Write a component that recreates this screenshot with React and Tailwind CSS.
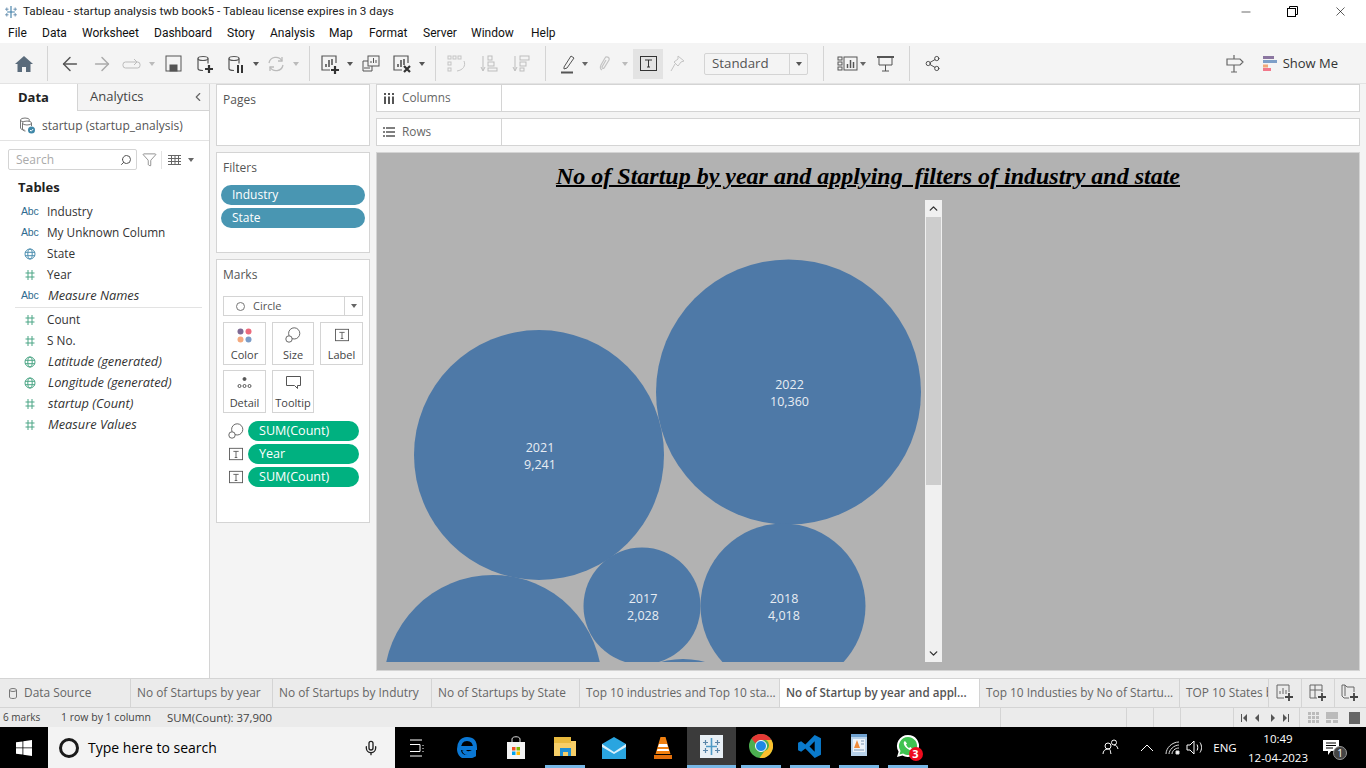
import {
  ArrowLeft,
  ArrowRight,
  ChevronDown,
  ChevronLeft,
  ChevronUp,
  Filter,
  Mic,
  Minus,
  Search,
  Share2,
  X,
} from "lucide-react";

const menus = [
  { label: "File", w: "w-[34px]" },
  { label: "Data", w: "w-[40px]" },
  { label: "Worksheet", w: "w-[72px]" },
  { label: "Dashboard", w: "w-[73px]" },
  { label: "Story", w: "w-[43px]" },
  { label: "Analysis", w: "w-[59px]" },
  { label: "Map", w: "w-[40px]" },
  { label: "Format", w: "w-[54px]" },
  { label: "Server", w: "w-[48px]" },
  { label: "Window", w: "w-[60px]" },
  { label: "Help", w: "w-[30px]" },
];

const fields = [
  { icon: "abc", name: "Industry" },
  { icon: "abc", name: "My Unknown Column" },
  { icon: "globe", name: "State", color: "#4e8fb0" },
  { icon: "hash", name: "Year", color: "#4ba585" },
  { icon: "abc", name: "Measure Names", italic: true },
];

const measures = [
  { icon: "hash", name: "Count", color: "#4ba585" },
  { icon: "hash", name: "S No.", color: "#4ba585" },
  { icon: "globe", name: "Latitude (generated)", italic: true, color: "#4ba585" },
  { icon: "globe", name: "Longitude (generated)", italic: true, color: "#4ba585" },
  { icon: "hash", name: "startup (Count)", italic: true, color: "#4ba585" },
  { icon: "hash", name: "Measure Values", italic: true, color: "#4ba585" },
];

const tabs = [
  { label: "No of Startups by year", w: "w-[142px]" },
  { label: "No of Startups by Indutry", w: "w-[159px]" },
  { label: "No of Startups by State", w: "w-[148px]" },
  { label: "Top 10 industries and Top 10 sta...", w: "w-[200px]" },
  { label: "No of Startup by year and appl...", w: "w-[200px]", active: true },
  { label: "Top 10 Industies by No of Startu...", w: "w-[200px]" },
];

const circles = [
  { cx: 162, cy: 255, r: 125, a: "2021", b: "9,241" },
  { cx: 411.5, cy: 192, r: 132.5, a: "2022", b: "10,360" },
  { cx: 265, cy: 406, r: 58.5, a: "2017", b: "2,028" },
  { cx: 406, cy: 406, r: 82.5, a: "2018", b: "4,018" },
  { cx: 116, cy: 484, r: 109 },
  { cx: 306, cy: 541, r: 82 },
];

function Svg({ children, size = 20, className = "" }) {
  return (
    <svg width={size} height={size} viewBox="0 0 20 20" fill="none" stroke="currentColor" strokeWidth="1.2" className={className}>
      {children}
    </svg>
  );
}

function Slot({ w, children, className = "" }) {
  return <div className={`${w} shrink-0 flex items-center justify-center ${className}`}>{children}</div>;
}

function Caret({ className = "text-[#666]" }) {
  return <span className={`w-0 h-0 border-x-[3.5px] border-x-transparent border-t-[4px] border-t-current ${className}`} />;
}

function Db({ add, pause }) {
  return (
    <Svg>
      <ellipse cx="8" cy="4.5" rx="5" ry="2" />
      <path d="M3 4.5v10c0 1 2 2 5 2M13 4.5v5" />
      {add && <path d="M10 15h8M14 11v8" strokeWidth="2.2" stroke="#333" />}
      {pause && <path d="M12 11v8M16 11v8" strokeWidth="2" stroke="#333" />}
    </Svg>
  );
}

function BarsIcon({ mark }) {
  return (
    <Svg>
      <path d="M16 9V2H2v14h8" />
      <path d="M6 13v-3M9 13V6M12 11V5" strokeWidth="1.6" />
      {mark === "add" && <path d="M11 16h8M15 12v8" strokeWidth="2.2" stroke="#333" />}
      {mark === "x" && <path d="M12 12l6 6M18 12l-6 6" strokeWidth="2.2" stroke="#333" />}
    </Svg>
  );
}

function TBox({ size = 16 }) {
  return (
    <svg width={size} height={size} viewBox="0 0 16 16" fill="none" stroke="#555" className="shrink-0">
      <rect x="0.5" y="1.5" width="15" height="13" />
      <path d="M5 5h6M8 5v7M6.5 12h3" />
    </svg>
  );
}

function SizeIcon({ size = 20 }) {
  return (
    <svg width={size} height={size} viewBox="0 0 20 20" fill="none" stroke="#555" strokeWidth="1.1" className="shrink-0">
      <circle cx="11.5" cy="8" r="7" />
      <circle cx="5" cy="15" r="4" fill="#fff" />
    </svg>
  );
}

function TableauLogo({ size = 16, color = "#3f7fa8", bg }) {
  return (
    <svg width={size} height={size} viewBox="0 0 23 23" fill="none" stroke={color} strokeWidth="1.6">
      {bg && <rect width="23" height="23" fill={bg} stroke="none" />}
      <path d="M11.5 3v17M6 11.500h11" />
      <path d="M5.500 5v5M3 7.500h5M17.500 5v5M15 7.500h5M5.500 13v5M3 15.500h5M17.500 13v5M15 15.500h5" stroke="#5a85a8" strokeWidth="1.200" />
    </svg>
  );
}

function FieldIcon({ icon, color }) {
  if (icon === "abc") {
    return <span className="w-[19px] text-[10.5px] text-[#2f6b8f] font-['Liberation_Sans',sans-serif] leading-none tracking-[-0.2px]">Abc</span>;
  }
  if (icon === "globe") {
    return (
      <svg width="19" height="12" viewBox="0 0 19 12" fill="none" stroke={color}>
        <circle cx="9" cy="6" r="5" />
        <ellipse cx="9" cy="6" rx="2.2" ry="5" />
        <path d="M4 4.300h10M4 7.700h10" />
      </svg>
    );
  }
  return (
    <svg width="19" height="12" viewBox="0 0 19 12" fill="none" stroke={color}>
      <path d="M7 1v10M11 1v10M4.500 4h9M4.500 8h9" />
    </svg>
  );
}

function Field({ f }) {
  return (
    <div className="h-[21px] flex items-center gap-[7px] pl-[21px]">
      <FieldIcon icon={f.icon} color={f.color} />
      <span className={`text-[#333] ${f.italic ? "italic text-[12.8px] ml-[1px]" : "text-[11.8px]"}`}>{f.name}</span>
    </div>
  );
}

function Pill({ children, color = "bg-[#4996b2]", w = "w-[144px]", text = "text-[12px]" }) {
  return (
    <div className={`h-5 ${w} ${color} ${text} rounded-full flex items-center pl-[11px] text-white shrink-0`}>{children}</div>
  );
}

function MarkButton({ label, w = "w-[43px]", children }) {
  return (
    <div className={`${w} h-[43px] border border-[#d4d4d4] flex flex-col items-center justify-end pb-[2px]`}>
      <div className="h-6 flex items-center justify-center">{children}</div>
      <span className="text-[11px] leading-[15px] text-[#444]">{label}</span>
    </div>
  );
}

function MarkPill({ icon, label }) {
  return (
    <div className="flex items-center">
      <div className="w-[25px] flex justify-center pl-[1px]">{icon}</div>
      <Pill color="bg-[#00b180]" w="w-[111px]" text="text-[12.6px]">{label}</Pill>
    </div>
  );
}

function Shelf({ icon, label }) {
  return (
    <div className="h-7 bg-white border border-[#d4d4d4] flex">
      <div className="w-[125px] border-r border-[#d4d4d4] flex items-center gap-[7px] pl-[6px] text-[11.8px] text-[#666]">
        {icon}
        {label}
      </div>
    </div>
  );
}

function Sep({ w }) {
  return (
    <Slot w={w}>
      <div className="w-px h-[35px] bg-[#d4d4d4]" />
    </Slot>
  );
}

function Toolbar() {
  return (
    <div className="h-[41px] bg-[#f4f4f4] flex items-center pt-[1px] pl-[8px] pr-[28px] text-[#555] border-b border-[#e3e3e3]">
      <Slot w="w-[32px]">
        <svg width="18" height="16" viewBox="0 0 18 16" fill="#5a6b7b">
          <path d="M9 0L0 8h2.500v8h4.500v-5h4v5h4.500V8H18z" />
        </svg>
      </Slot>
      <Sep w="w-[14px]" />
      <Slot w="w-[32px]"><ArrowLeft size={22} strokeWidth={1.6} className="text-[#555]" /></Slot>
      <Slot w="w-[32px]"><ArrowRight size={22} strokeWidth={1.6} className="text-[#aaa]" /></Slot>
      <Slot w="w-[28px]">
        <svg width="20" height="12" viewBox="0 0 20 12" fill="none" stroke="#bbb">
          <rect x="1" y="4" width="17" height="6" rx="2.500" />
          <path d="M12 1l3 3-3 3" />
        </svg>
      </Slot>
      <Slot w="w-[12px]"><Caret className="text-[#bbb]" /></Slot>
      <Slot w="w-[30px]">
        <svg width="17" height="17" viewBox="0 0 17 17" fill="none" stroke="#555">
          <rect x="1" y="1" width="15" height="15" />
          <rect x="5" y="10" width="7" height="6" fill="#555" />
        </svg>
      </Slot>
      <Slot w="w-[34px]"><Db add /></Slot>
      <Slot w="w-[28px]"><Db pause /></Slot>
      <Slot w="w-[12px]"><Caret className="text-[#555]" /></Slot>
      <Slot w="w-[28px]">
        <svg width="18" height="18" viewBox="0 0 18 18" fill="none" stroke="#bbb" strokeWidth="1.300">
          <path d="M2 8a7 7 0 0 1 13-2M16 10a7 7 0 0 1-13 2" />
          <path d="M15 2v4h-4M3 16v-4h4" />
        </svg>
      </Slot>
      <Slot w="w-[12px]"><Caret className="text-[#bbb]" /></Slot>
      <Sep w="w-[14px]" />
      <Slot w="w-[28px]"><BarsIcon mark="add" /></Slot>
      <Slot w="w-[12px]"><Caret className="text-[#555]" /></Slot>
      <Slot w="w-[30px]">
        <svg width="18" height="18" viewBox="0 0 18 18" fill="none" stroke="#555">
          <rect x="6" y="1" width="11" height="10" fill="#f4f4f4" />
          <path d="M9 8V6M11.500 8V3M14 8V5" />
          <path d="M6 6H1v10h9v-5" />
          <path d="M3 14v-2M5 14v-2M7 14v-2" />
        </svg>
      </Slot>
      <Slot w="w-[32px]"><BarsIcon mark="x" /></Slot>
      <Slot w="w-[8px]"><Caret className="text-[#555]" /></Slot>
      <Sep w="w-[18px]" />
      <Slot w="w-[26px]">
        <svg width="20" height="18" viewBox="0 0 20 18" fill="none" stroke="#c4c4c4">
          <rect x="1" y="1" width="3" height="3" /><rect x="6" y="1" width="3" height="3" /><rect x="11" y="1" width="3" height="3" />
          <rect x="1" y="7" width="3" height="3" /><rect x="1" y="13" width="3" height="3" />
          <path d="M17 6c2 5-1 9-7 10" />
        </svg>
      </Slot>
      <Slot w="w-[38px]">
        <svg width="18" height="18" viewBox="0 0 18 18" fill="none" stroke="#bdbdbd">
          <path d="M3 1v14M1 12l2 4 2-4" />
          <rect x="8" y="1" width="4" height="4" /><rect x="8" y="7" width="6" height="4" /><rect x="8" y="13" width="9" height="3" />
        </svg>
      </Slot>
      <Slot w="w-[26px]">
        <svg width="18" height="18" viewBox="0 0 18 18" fill="none" stroke="#bdbdbd">
          <path d="M3 1v14M1 12l2 4 2-4" />
          <rect x="8" y="1" width="9" height="4" /><rect x="8" y="7" width="6" height="4" /><rect x="8" y="13" width="4" height="3" />
        </svg>
      </Slot>
      <Sep w="w-[22px]" />
      <Slot w="w-[24px]">
        <svg width="16" height="20" viewBox="0 0 16 20" fill="none" stroke="#555">
          <path d="M4 13L11 2l3 2-7 10-3 1z" />
          <path d="M1 18.500h12" strokeWidth="2" />
        </svg>
      </Slot>
      <Slot w="w-[10px]"><Caret /></Slot>
      <Slot w="w-[30px]">
        <svg width="14" height="20" viewBox="0 0 14 20" fill="none" stroke="#c4c4c4" strokeWidth="1.200">
          <path d="M4 16c-2-1-2-3-1-5l4-7c1-2 5-1 4 2l-5 8c-1 1-2 0-2-1l4-7" />
        </svg>
      </Slot>
      <Slot w="w-[10px]"><Caret className="text-[#bbb]" /></Slot>
      <div className="w-[3px] shrink-0" />
      <Slot w="w-[30px]" className="h-[30px] bg-[#e3e3e3]">
        <svg width="17" height="15" viewBox="0 0 17 15" fill="none" stroke="#333">
          <rect x="0.500" y="0.500" width="16" height="14" />
          <path d="M5 4h7M8.500 4v7M7 11h3" />
        </svg>
      </Slot>
      <Slot w="w-[28px]">
        <svg width="15" height="18" viewBox="0 0 15 18" fill="none" stroke="#c4c4c4">
          <path d="M8 1l6 5-3 1-3 4-1-1-3-3 4-3zM5 9l-4 7" />
        </svg>
      </Slot>
      <div className="w-[13px] shrink-0" />
      <div className="w-[104px] shrink-0 h-[22px] bg-[#f4f4f4] border border-[#d4d4d4] rounded-[2px] flex items-center">
        <span className="flex-1 pl-[7px] text-[13.3px] text-[#555]">Standard</span>
        <div className="w-[18px] h-full border-l border-[#d4d4d4] flex items-center justify-center"><Caret className="text-[#555]" /></div>
      </div>
      <Sep w="w-[30px]" />
      <Slot w="w-[18px]">
        <svg width="21" height="16" viewBox="0 0 21 16" fill="none" stroke="#555" className="shrink-0">
          <rect x="1" y="1" width="4" height="3" /><rect x="1" y="6" width="4" height="3" /><rect x="1" y="11" width="4" height="3" />
          <rect x="7" y="1" width="13" height="13" />
          <path d="M10.500 12V8M13.500 12V4M16.500 12V6" strokeWidth="1.500" />
        </svg>
      </Slot>
      <Slot w="w-[14px]"><Caret /></Slot>
      <Slot w="w-[30px]">
        <svg width="17" height="16" viewBox="0 0 17 16" fill="none" stroke="#555">
          <path d="M0 1h17" strokeWidth="2" />
          <path d="M2 1v8h13V1M8.500 9v6M5 15h7" />
        </svg>
      </Slot>
      <Sep w="w-[18px]" />
      <Slot w="w-[28px]"><Share2 size={17} strokeWidth={1.3} className="text-[#444]" /></Slot>
      <div className="flex-1" />
      <svg width="18" height="19" viewBox="0 0 18 19" fill="none" stroke="#666" strokeWidth="1.200">
        <path d="M1 5h13l3 3-3 3H1zM8 1v4M8 11v7M5 18h6" />
      </svg>
      <svg width="14" height="16" viewBox="0 0 14 16" className="ml-[19px]">
        <rect x="0" y="0" width="11" height="3" fill="#8b76a0" />
        <rect x="0" y="4" width="14" height="3" fill="#7e9fc8" />
        <rect x="0" y="8.500" width="5" height="3" fill="#f1a878" />
        <rect x="0" y="12" width="8" height="3" fill="#f2788a" />
      </svg>
      <span className="ml-[6px] text-[13px] text-[#333]">Show Me</span>
    </div>
  );
}

function DataPane() {
  return (
    <div className="w-[210px] shrink-0 bg-white border-r border-[#d4d4d4] flex flex-col">
      <div className="h-[27px] flex">
        <div className="w-[77px] flex items-center pl-[18px] text-[13px] font-bold text-[#222]">Data</div>
        <div className="flex-1 bg-[#f4f4f4] border-l border-b border-[#d4d4d4] flex items-center pl-[12px] text-[13px] text-[#444]">
          Analytics
          <ChevronLeft size={14} className="ml-auto mr-[4px] text-[#666]" />
        </div>
      </div>
      <div className="h-[30px] flex items-center gap-[6px] pl-[19px] border-b border-[#e3e3e3] text-[12px] text-[#555]">
        <svg width="17" height="17" viewBox="0 0 17 17" fill="none" stroke="#777">
          <ellipse cx="6" cy="3" rx="4.500" ry="2" />
          <ellipse cx="8" cy="6" rx="4.500" ry="2" fill="#fff" />
          <path d="M1.500 3v8c0 1 2 2 4 2M3.500 6v6c0 1 1 2 3 2M12.500 6v3" />
          <circle cx="12.500" cy="13" r="3.500" fill="#3f87a8" stroke="none" />
          <path d="M11 13l1.200 1.200 2-2.200" stroke="#fff" />
        </svg>
        startup (startup_analysis)
      </div>
      <div className="h-[37px] flex items-center pl-[8px]">
        <div className="w-[129px] h-[21px] border border-[#d4d4d4] rounded-[2px] flex items-center pl-[7px] pr-1 text-[12px] text-[#aaa]">
          <span className="flex-1">Search</span>
          <Search size={12} className="text-[#555] -scale-x-100" />
        </div>
        <Filter size={15} strokeWidth={1} className="ml-[5px] text-[#555]" />
        <div className="w-px h-[18px] bg-[#e3e3e3] ml-[4px]" />
        <svg width="13" height="10" viewBox="0 0 13 10" fill="none" stroke="#666" className="ml-[6px]">
          <path d="M0 .5h13M0 3.500h13M0 6.500h13M0 9.500h13M3.500 0v10M7 0v10M10.500 0v10" />
        </svg>
        <Caret className="text-[#666] ml-[7px]" />
      </div>
      <div className="h-[19px] flex items-center pl-[18px] text-[13px] font-bold text-[#222]">Tables</div>
      <div className="mt-[4px]">
        {fields.map((f) => (
          <Field key={f.name} f={f} />
        ))}
      </div>
      <div className="h-px bg-[#e3e3e3] ml-[15px] mr-[7px] my-[1px]" />
      <div>
        {measures.map((f) => (
          <Field key={f.name} f={f} />
        ))}
      </div>
    </div>
  );
}

function CardsColumn() {
  return (
    <div className="w-[154px] shrink-0 ml-[6px] flex flex-col gap-[6px]">
      <div className="h-[62px] bg-white border border-[#d4d4d4] pl-[6px] pt-[6px] text-[12px] text-[#555]">Pages</div>
      <div className="h-[101px] bg-white border border-[#d4d4d4] px-[4px] pt-[7px] text-[12px] text-[#555]">
        <div className="pl-[2px] mb-[9px] leading-4">Filters</div>
        <div className="flex flex-col gap-[3px]">
          <Pill>Industry</Pill>
          <Pill>State</Pill>
        </div>
      </div>
      <div className="h-[264px] bg-white border border-[#d4d4d4] px-[6px] pt-[7px]">
        <div className="text-[12px] text-[#555] leading-4">Marks</div>
        <div className="mt-[13px] h-5 border border-[#d4d4d4] flex items-center text-[11px] text-[#555]">
          <span className="w-[9px] h-[9px] rounded-full border border-[#777] ml-[12px] mr-[8px]" />
          <span className="flex-1">Circle</span>
          <div className="w-[18px] h-full border-l border-[#d4d4d4] flex items-center justify-center"><Caret /></div>
        </div>
        <div className="mt-[6px] flex gap-[6px]">
          <MarkButton label="Color">
            <svg width="15" height="15" viewBox="0 0 15 15">
              <circle cx="3.500" cy="3.500" r="3" fill="#7f6a94" />
              <circle cx="11.500" cy="3.500" r="3" fill="#ec6a7c" />
              <circle cx="3.500" cy="11.500" r="3" fill="#f4a97e" />
              <circle cx="11.500" cy="11.500" r="3" fill="#7b9cc7" />
            </svg>
          </MarkButton>
          <MarkButton label="Size" w="w-[42px]"><SizeIcon size={16} /></MarkButton>
          <MarkButton label="Label"><TBox size={14} /></MarkButton>
        </div>
        <div className="mt-[5px] flex gap-[6px]">
          <MarkButton label="Detail">
            <svg width="15" height="12" viewBox="0 0 15 12" fill="none" stroke="#555">
              <circle cx="7.500" cy="2" r="1.500" fill="#555" />
              <circle cx="2.500" cy="9" r="1.500" /><circle cx="7.500" cy="9" r="1.500" /><circle cx="12.500" cy="9" r="1.500" />
            </svg>
          </MarkButton>
          <MarkButton label="Tooltip" w="w-[42px]">
            <svg width="15" height="14" viewBox="0 0 15 14" fill="none" stroke="#555">
              <path d="M.5 .5h14v9h-3v3l-3-3H.5z" />
            </svg>
          </MarkButton>
        </div>
        <div className="mt-[8px] flex flex-col gap-[3px]">
          <MarkPill icon={<SizeIcon size={16} />} label="SUM(Count)" />
          <MarkPill icon={<TBox size={14} />} label="Year" />
          <MarkPill icon={<TBox size={14} />} label="SUM(Count)" />
        </div>
      </div>
    </div>
  );
}

function Worksheet() {
  return (
    <div className="flex-1 ml-[6px] mr-[6px] min-w-0 flex flex-col">
      <Shelf
        label="Columns"
        icon={
          <svg width="12" height="11" viewBox="0 0 12 11" stroke="#555" strokeWidth="2">
            <path d="M2 0v2M6 0v2M10 0v2M2 3.500v7.500M6 3.500v7.500M10 3.500v7.500" />
          </svg>
        }
      />
      <div className="h-[6px]" />
      <Shelf
        label="Rows"
        icon={
          <svg width="12" height="10" viewBox="0 0 12 10" fill="none" stroke="#555" strokeWidth="1.400">
            <path d="M3 1h9M3 5h9M3 9h9M0 1h2M0 5h2M0 9h2" />
          </svg>
        }
      />
      <div className="h-[6px]" />
      <div className="h-[519px] bg-[#b2b2b2] border border-[#d4d4d4] relative overflow-hidden">
        <h1 className="h-[46px] flex items-center justify-center font-['Liberation_Serif',serif] font-bold italic underline decoration-2 text-[24px] text-black whitespace-pre">
          No of Startup by year and applying  filters of industry and state
        </h1>
        <svg width="548" height="462" className="absolute left-0 top-[47px]">
          {circles.map((c) => (
            <g key={c.cx}>
              <circle cx={c.cx} cy={c.cy} r={c.r} fill="#4e79a7" />
              {c.a && (
                <text textAnchor="middle" fontSize="12.500" fill="#e8edf3" fontFamily="Open Sans, sans-serif">
                  <tspan x={c.cx + 1} y={c.cy - 3}>{c.a}</tspan>
                  <tspan x={c.cx + 1} y={c.cy + 14}>{c.b}</tspan>
                </text>
              )}
            </g>
          ))}
        </svg>
        <div className="absolute left-[548px] top-[47px] w-[17px] h-[462px] bg-[#f0f0f0] flex flex-col">
          <div className="h-[17px] flex items-center justify-center"><ChevronUp size={13} strokeWidth={2.500} className="text-[#333]" /></div>
          <div className="h-[268px] bg-[#cdcdcd] mx-[1px]" />
          <div className="flex-1" />
          <div className="h-[17px] flex items-center justify-center"><ChevronDown size={13} strokeWidth={2.500} className="text-[#333]" /></div>
        </div>
      </div>
    </div>
  );
}

function NewTabIcon({ kind }) {
  return (
    <svg width="19" height="18" viewBox="0 0 19 18" fill="none" stroke="#666">
      {kind === "sheet" && <><path d="M13 8V1H1v13h7" /><path d="M4 10V7M7 10V4M10 10V6" /></>}
      {kind === "dash" && <><path d="M13 8V1H1v13h7M1 6h12M6 1v13" /></>}
      {kind === "story" && <><path d="M8 14H3L1 12V1h3l2 2h7v5M4 1v11" /></>}
      <path d="M9 13h8M13 9v8" strokeWidth="1.800" stroke="#444" />
    </svg>
  );
}

function TabBar() {
  return (
    <div className="h-[30px] bg-[#ebebeb] border-y border-[#d4d4d4] flex text-[11.9px] text-[#666]">
      <div className="w-[131px] shrink-0 border-r border-[#d4d4d4] flex items-center gap-[7px] pl-[9px]">
        <svg width="8" height="11" viewBox="0 0 8 11" fill="none" stroke="#777">
          <ellipse cx="4" cy="2" rx="3.500" ry="1.500" />
          <path d="M.5 2v7c0 1 1.500 1.500 3.500 1.500S7.500 10 7.500 9V2" />
        </svg>
        Data Source
      </div>
      {tabs.map((t) => (
        <div
          key={t.label}
          className={`${t.w} shrink-0 border-r border-[#d4d4d4] flex items-center pl-[6px] whitespace-nowrap overflow-hidden ${t.active ? "bg-white font-semibold text-[#555] text-[11.6px]" : ""}`}
        >
          {t.label}
        </div>
      ))}
      <div className="flex-1 min-w-0 flex items-center pl-[6px] whitespace-nowrap overflow-hidden">TOP 10 States by</div>
      <div className="w-[33px] shrink-0 border-l border-[#d4d4d4] flex items-center justify-center"><NewTabIcon kind="sheet" /></div>
      <div className="w-[33px] shrink-0 border-l border-[#d4d4d4] flex items-center justify-center"><NewTabIcon kind="dash" /></div>
      <div className="w-[32px] shrink-0 border-l border-[#d4d4d4] flex items-center justify-center"><NewTabIcon kind="story" /></div>
    </div>
  );
}

function StatusBar() {
  return (
    <div className="h-[19px] bg-[#ebebeb] flex items-center text-[#444]">
      <span className="ml-[3px] w-[58px] text-[10px]">6 marks</span>
      <span className="w-[106px] text-[10.5px]">1 row by 1 column</span>
      <span className="text-[11.400px]">SUM(Count): 37,900</span>
      <div className="flex-1" />
      <div className="w-[126px] h-full border-l border-[#d4d4d4]" />
      <div className="w-[27px] h-full border-l border-[#d4d4d4]" />
      <div className="w-[27px] h-full border-l border-[#d4d4d4]" />
      <div className="w-[53px] h-full border-l border-[#d4d4d4]" />
      <div className="h-full border-l border-[#d4d4d4] w-[66px] flex items-center pl-[7px]">
        <svg width="54" height="8" viewBox="0 0 54 8" fill="#555">
          <path d="M0 0h1v8H0zM6 0v8L2 4zM18 0v8l-4-4zM30 0v8l4-4zM42 0v8l4-4zM47 0h1v8h-1z" />
        </svg>
      </div>
      <div className="w-[67px] h-full border-l border-[#d4d4d4] flex items-center pl-[8px] gap-[7px]">
        <svg width="11" height="11" viewBox="0 0 11 11" fill="#bbb"><path d="M0 0h3v3H0zM4 0h3v3H4zM8 0h3v3H8zM0 4h3v3H0zM4 4h3v3H4zM8 4h3v3H8zM0 8h3v3H0zM4 8h3v3H4zM8 8h3v3H8z" /></svg>
        <svg width="12" height="11" viewBox="0 0 12 11" fill="#bbb"><path d="M0 0h12v7H0zM0 8h5v3H0zM7 8h5v3H7z" /></svg>
        <div className="w-[11px] h-[12px] bg-[#666] ml-[4px]" />
      </div>
    </div>
  );
}

function TaskItem({ w = "w-[49px]", line = true, active, children }) {
  return (
    <div className={`${w} shrink-0 flex justify-center ${active ? "bg-[#3b3b3b] border-b-[3px] border-[#77b7e6]" : ""}`}>
      <div className={`w-[40px] flex items-center justify-center ${line && !active ? "border-b-[3px] border-[#77b7e6]" : ""}`}>
        {children}
      </div>
    </div>
  );
}

function Taskbar() {
  return (
    <div className="h-[41px] bg-black flex items-stretch text-white">
      <div className="w-[48px] flex items-center justify-center">
        <svg width="16" height="16" viewBox="0 0 16 16" fill="#fff">
          <path d="M0 2.300L6.500 1.400V7.500H0zM7.300 1.300L16 0V7.500H7.300zM0 8.300H6.500V14.600L0 13.700zM7.300 8.300H16V16L7.300 14.700z" />
        </svg>
      </div>
      <div className="w-[347px] bg-[#f3f3f3] flex items-center pl-[11px] text-black">
        <span className="w-[20px] h-[20px] rounded-full border-[3px] border-[#1a1a1a]" />
        <span className="ml-[9px] text-[14px] flex-1">Type here to search</span>
        <Mic size={16} className="mr-[16px] text-[#222]" />
      </div>
      <TaskItem w="w-[48px]" line={false}>
        <svg width="15" height="18" viewBox="0 0 15 18" fill="none" stroke="#fff" className="-ml-[4px]">
          <path d="M0 1h12M0 17h12M0 5.500h10v7H0M13 6v1M13 9v1M13 12v1" />
        </svg>
      </TaskItem>
      <TaskItem w="w-[48px]" line={false}>
        <svg width="21" height="21" viewBox="0 0 21 21" fill="none">
          <path d="M3 11h15c0-6-3-9-8-9S2 6 2 12c0 6 4 8 8 8 3 0 5-1 7-2v-4c-4 3-9 3-10-1" stroke="#0b78d4" strokeWidth="4" />
        </svg>
      </TaskItem>
      <TaskItem line={false}>
        <svg width="20" height="23" viewBox="0 0 20 23">
          <path d="M6 6V3c0-3 8-3 8 0v3" fill="none" stroke="#ddd" />
          <rect x="1" y="6" width="18" height="17" fill="#f4f4f4" />
          <rect x="6" y="11" width="3.500" height="3.500" fill="#f25022" />
          <rect x="10.500" y="11" width="3.500" height="3.500" fill="#7fba00" />
          <rect x="6" y="15.500" width="3.500" height="3.500" fill="#00a4ef" />
          <rect x="10.500" y="15.500" width="3.500" height="3.500" fill="#ffb900" />
        </svg>
      </TaskItem>
      <TaskItem>
        <svg width="22" height="19" viewBox="0 0 22 19">
          <path d="M0 2h8l2 2h12v15H0z" fill="#f6ce68" />
          <rect x="0" y="0" width="17" height="6" fill="#e8b93e" />
          <rect x="6" y="11" width="11" height="8" fill="#1e8fd5" />
          <rect x="9" y="15" width="5" height="4" fill="#f6ce68" />
        </svg>
      </TaskItem>
      <TaskItem line={false}>
        <svg width="24" height="22" viewBox="0 0 24 22">
          <path d="M0 7L12 0l12 7v15H0z" fill="#2aa5e0" />
          <path d="M0 7l12 8 12-8v3l-12 7L0 10z" fill="#d8f0fb" />
        </svg>
      </TaskItem>
      <TaskItem line={false}>
        <svg width="20" height="24" viewBox="0 0 20 24">
          <path d="M7.500 1h5l5 17H2.500z" fill="#f08010" />
          <path d="M6 8h8l1 3H5zM4.500 13h11l.6 2H3.900z" fill="#fff" />
          <rect x="1" y="19" width="18" height="4" fill="#e26f0b" />
        </svg>
      </TaskItem>
      <TaskItem active>
        <TableauLogo size={23} bg="#e8eff5" color="#4f9ac6" />
      </TaskItem>
      <TaskItem>
        <svg width="24" height="24" viewBox="0 0 24 24">
          <circle cx="12" cy="12" r="12" fill="#4caf50" />
          <path d="M12 0a12 12 0 0 1 10.400 6H12a6 6 0 0 0-5.500 3.600L2.500 4.500A12 12 0 0 1 12 0z" fill="#e53935" />
          <path d="M22.400 6A12 12 0 0 1 10.500 23.900L15.500 17a6 6 0 0 0 1.500-11z" fill="#fbc02d" />
          <circle cx="12" cy="12" r="5.500" fill="#1e88e5" stroke="#fff" />
        </svg>
      </TaskItem>
      <TaskItem>
        <svg width="25" height="25" viewBox="0 0 24 24">
          <path d="M17 1L23 4v16l-6 3L8 14l-4 3-3-1.500v-7L4 7l4 3z" fill="#0a7acc" />
          <path d="M17 7l-5 5 5 5z" fill="#000" />
        </svg>
      </TaskItem>
      <TaskItem>
        <svg width="18" height="24" viewBox="0 0 18 24">
          <rect x="1" y="0" width="16" height="22" fill="#b8d2ea" />
          <rect x="1" y="0" width="16" height="3" fill="#6ea0cf" />
          <rect x="3" y="5" width="12" height="13" fill="#eef4fa" />
          <path d="M4 14l3-8 3 8z" fill="#ef8b3b" />
          <path d="M11 7h3M11 10h3M4 16h10" stroke="#7a96b3" />
        </svg>
      </TaskItem>
      <div className="w-[49px] shrink-0 flex justify-center">
        <div className="w-[40px] flex items-center justify-center border-b-[3px] border-[#77b7e6] relative">
          <svg width="24" height="24" viewBox="0 0 24 24">
            <path d="M12 1a11 11 0 0 0-9.400 16.700L1 23l5.500-1.500A11 11 0 1 0 12 1z" fill="#fff" />
            <path d="M12 3a9 9 0 0 0-7.500 14l-1 3.500 3.600-1A9 9 0 1 0 12 3z" fill="#3fc351" />
            <path d="M9 7c-2 1-1.500 4 1 6.500s5 3.500 6.500 1.500l-2-2-1.500 1c-1-.5-2.500-2-3-3.500l1-1z" fill="#fff" />
          </svg>
          <span className="absolute left-[21px] top-[20px] w-[14px] h-[14px] rounded-full bg-[#ee0b1d] text-[11px] font-bold leading-[14px] text-center text-white">3</span>
        </div>
      </div>
      <div className="flex-1" />
      <div className="flex items-center text-white shrink-0">
        <Slot w="w-[28px]">
          <svg width="18" height="18" viewBox="0 0 18 18" fill="none" stroke="#fff">
            <circle cx="6" cy="7" r="3" /><circle cx="12" cy="3.500" r="2.500" />
            <path d="M1 15c0-3 2-5 5-5s2 2 3 5M12 6c2 0 3 1 4 4" />
          </svg>
        </Slot>
        <div className="w-[10px]" />
        <Slot w="w-[24px]">
          <svg width="14" height="8" viewBox="0 0 14 8" fill="none" stroke="#fff"><path d="M1 7l6-6 6 6" /></svg>
        </Slot>
        <div className="w-[2px]" />
        <Slot w="w-[22px]">
          <svg width="15" height="14" viewBox="0 0 15 14" fill="none" stroke="#ddd">
            <path d="M1 13C1 7 7 1 14 1M4 13c0-4 5-9 10-9M7 13c0-3 3-6 7-6" />
            <path d="M11 10h3v3h-3z" fill="#fff" />
          </svg>
        </Slot>
        <Slot w="w-[22px]">
          <svg width="17" height="15" viewBox="0 0 17 15" fill="none" stroke="#fff">
            <path d="M1 5h3l4-4v13l-4-4H1zM11 4.500c1 2 1 4 0 6M14 2.500c2 3 2 7 0 10" />
          </svg>
        </Slot>
        <Slot w="w-[40px]" className="text-[11.500px]">ENG</Slot>
        <div className="w-[66px] text-center text-[11.500px] leading-[19px] whitespace-nowrap">
          <div>10:49</div>
          <div>12-04-2023</div>
        </div>
        <div className="w-[44px] flex justify-center relative">
          <svg width="16" height="15" viewBox="0 0 16 15" fill="#fff" className="-translate-x-[2px]">
            <path d="M0 0h16v11H8l-3 4v-4H0z" />
            <path d="M3 3h10M3 5.500h10M3 8h7" stroke="#000" />
          </svg>
          <span className="absolute left-[22px] top-[6px] w-[14px] h-[14px] rounded-full bg-[#444] border border-[#999] text-[10px] leading-3 text-center text-white">1</span>
        </div>
        <div className="w-[11px]" />
      </div>
    </div>
  );
}

export default function App() {
  return (
    <div className="w-[1366px] h-[768px] overflow-hidden flex flex-col bg-white font-['Open_Sans',sans-serif]">
      {/* title bar */}
      <div className="h-[23px] shrink-0 flex items-center pl-[3px] font-['Roboto',sans-serif]">
        <TableauLogo size={16} />
        <span className="ml-[4px] text-[11.75px] text-[#222]">Tableau - startup analysis twb book5 - Tableau license expires in 3 days</span>
        <div className="flex-1" />
        <Minus size={14} strokeWidth={1} className="mr-[34px] text-black" />
        <svg width="11" height="11" viewBox="0 0 11 11" fill="none" stroke="#000" className="mr-[35px]">
          <rect x="0.500" y="2.500" width="8" height="8" />
          <path d="M2.500 2.500V.5h8v8h-2" />
        </svg>
        <X size={15} strokeWidth={1} className="mr-[18px] text-black" />
      </div>
      {/* menu bar */}
      <div className="h-[20px] shrink-0 flex items-center pl-[8px] text-[12px] text-[#111] font-['Roboto',sans-serif]">
        {menus.map((m) => (
          <span key={m.label} className={m.w}>{m.label}</span>
        ))}
      </div>
      <Toolbar />
      <div className="h-[594px] flex bg-[#f4f4f4]">
        <DataPane />
        <div className="flex flex-1 min-w-0">
          <CardsColumn />
          <Worksheet />
        </div>
      </div>
      <TabBar />
      <StatusBar />
      <Taskbar />
    </div>
  );
}
